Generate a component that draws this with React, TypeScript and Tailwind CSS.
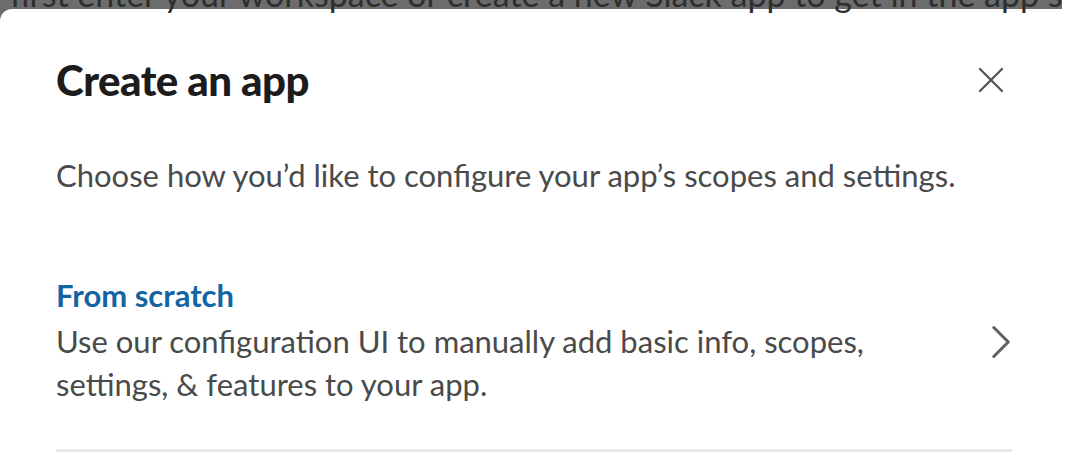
import { X, ChevronRight } from "lucide-react"

export default function App() {
  return (
    <div className="w-[1086px] h-[455px] overflow-hidden bg-white font-['Lato','Liberation_Sans',sans-serif]">
      {/* dimmed page behind the modal */}
      <div className="w-[1062px] h-[22px] bg-[#6c6c6c] overflow-hidden">
        <p className="-mt-[24px] pl-[10px] whitespace-nowrap text-[34px] leading-[36px] text-[#2e2e2e]">
          first enter your workspace or create a new Slack app to get in the app settings
        </p>
      </div>

      <div className="-mt-[13px] rounded-tl-[12px] bg-white pl-[56px] pr-[74px] pt-[46px]">
        <div className="flex items-center justify-between">
          <h1 className="text-[42px] leading-[50px] font-black tracking-[-0.5px] text-[#1d1c1d]">Create an app</h1>
          <button className="flex h-[44px] w-[44px] items-center justify-center mr-[-1px] text-[#555]">
            <X size={44} strokeWidth={1.3} />
          </button>
        </div>

        <p className="mt-[48px] text-[31px] leading-[44px] text-[#4a4a4a]">
          Choose how you’d like to configure your app’s scopes and settings.
        </p>

        <div className="mt-[84px] flex items-center justify-between border-b-[3px] border-[#e8e8e8] pb-[43px]">
          <div>
            <div className="text-[31px] leading-[29px] font-bold text-[#1264a3]">From scratch</div>
            <div className="mt-[10px] text-[31px] leading-[43px] text-[#4a4a4a]">
              Use our configuration UI to manually add basic info, scopes,
              <br />
              settings, &amp; features to your app.
            </div>
          </div>
          <ChevronRight size={58} strokeWidth={1.25} className="-mr-[18px] -mt-[4px] text-[#616061]" />
        </div>
      </div>
    </div>
  )
}
